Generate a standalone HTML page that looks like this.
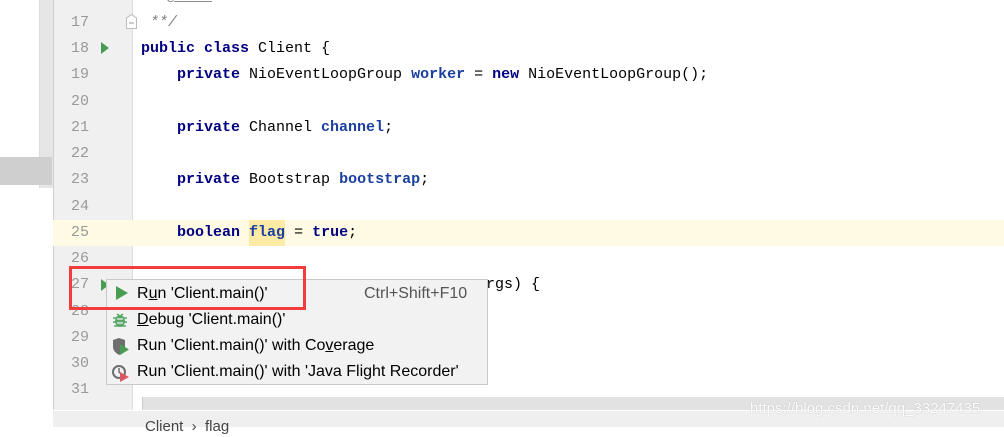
<!DOCTYPE html>
<html><head><meta charset="utf-8"><style>
*{margin:0;padding:0;box-sizing:border-box}
body{width:1004px;height:427px;overflow:hidden;background:#fff;position:relative;font-family:"Liberation Sans",sans-serif}
.abs{position:absolute}
.ln{position:absolute;left:53px;width:36px;text-align:right;font:15px "Liberation Mono",monospace;color:#999;line-height:20px}
.code{position:absolute;left:141px;font:15px "Liberation Mono",monospace;color:#000;line-height:20px;white-space:pre}
.k{color:#000080;font-weight:bold}
.f{font-weight:bold;color:#1b3fa0}
.mi{position:absolute;left:137px;font-size:16px;color:#000;line-height:20px;white-space:pre}
</style></head><body>
<div class="abs" style="left:39px;top:0;width:14px;height:188px;background:#e6e6e6;border-left:1px solid #ddd"></div>
<div class="abs" style="left:0;top:157px;width:52px;height:28px;background:#cfcfcf"></div>
<div class="abs" style="left:53px;top:0;width:80px;height:427px;background:#f0f0f0;border-left:1px solid #d0d0d0;border-right:1px solid #dcdcdc"></div>
<div class="abs" style="left:53px;top:220px;width:951px;height:26px;background:#fffae3"></div>

<div class="ln" style="top:-13px">16</div>
<div class="ln" style="top:13px">17</div>
<div class="ln" style="top:39px">18</div>
<div class="ln" style="top:65px">19</div>
<div class="ln" style="top:92px">20</div>
<div class="ln" style="top:118px">21</div>
<div class="ln" style="top:144px">22</div>
<div class="ln" style="top:170px">23</div>
<div class="ln" style="top:197px">24</div>
<div class="ln" style="top:223px">25</div>
<div class="ln" style="top:249px">26</div>
<div class="ln" style="top:275px">27</div>
<div class="ln" style="top:302px">28</div>
<div class="ln" style="top:328px">29</div>
<div class="ln" style="top:354px">30</div>
<div class="ln" style="top:380px">31</div>

<svg class="abs" style="left:100px;top:42px" width="10" height="12"><path d="M1 0 L9 6 L1 12Z" fill="#499c54"/></svg>
<svg class="abs" style="left:100px;top:279px" width="10" height="12"><path d="M1 0 L9 6 L1 12Z" fill="#499c54"/></svg>
<svg class="abs" style="left:126px;top:14px" width="11" height="15"><path d="M0.5 4 L5.5 0.5 L10.5 4 V14.5 H0.5Z" fill="#fff" stroke="#bbb"/><path d="M3 9H8" stroke="#999"/></svg>

<div class="code" style="top:-13px;left:167px;color:#8c8c8c;font-style:italic"><span style="text-decoration:underline;font-weight:bold">@date</span> 2019/12/19</div>
<div class="code" style="top:13px;left:150px;color:#808080;font-style:italic">**/</div>
<div class="code" style="top:39px"><span class="k">public class</span> Client {</div>
<div class="code" style="top:65px">    <span class="k">private</span> NioEventLoopGroup <span class="f">worker</span> = <span class="k">new</span> NioEventLoopGroup();</div>
<div class="code" style="top:118px">    <span class="k">private</span> Channel <span class="f">channel</span>;</div>
<div class="code" style="top:170px">    <span class="k">private</span> Bootstrap <span class="f">bootstrap</span>;</div>
<div class="abs" style="left:249px;top:220px;width:36px;height:26px;background:#fdeaa5"></div>
<div class="code" style="top:223px">    <span class="k">boolean</span> <span class="f">flag</span> = <span class="k">true</span>;</div>
<div class="code" style="top:275px;left:486px">rgs) {</div>

<div class="abs" style="left:142px;top:397px;width:862px;height:14px;background:#e2e2e2;border-left:1px solid #ccc"></div>
<div class="abs" style="left:53px;top:410px;width:951px;height:17px;background:#efefef;border-top:1px solid #fff"></div>
<div class="abs" style="left:145px;top:417px;font-size:15px;color:#444;line-height:20px">Client &nbsp;› &nbsp;flag</div>
<div class="abs" style="left:750px;top:399px;font-size:15px;color:#fff;text-shadow:0 0 1px #aaa;line-height:20px">https://blog.csdn.net/qq_33247435</div>

<div class="abs" style="left:106px;top:279px;width:382px;height:106px;background:#f2f2f2;border:1px solid #c9c9c9"></div>
<svg class="abs" style="left:115px;top:286px" width="14" height="14"><path d="M1 0 L13 7 L1 14Z" fill="#499c54"/></svg>
<div class="mi" style="top:284px">R<u>u</u>n 'Client.main()'</div>
<div class="mi" style="top:284px;left:364px;color:#555">Ctrl+Shift+F10</div>
<svg class="abs" style="left:112px;top:312px" width="16" height="16"><ellipse cx="8" cy="9" rx="5" ry="6" fill="#59a869"/><path d="M1 6H15M1 10H15M2 14H14M5 2L8 4L11 2" stroke="#59a869" stroke-width="1.5" fill="none"/><path d="M5 7H11M5 11H11" stroke="#f2f2f2" stroke-width="1.3"/></svg>
<div class="mi" style="top:310px"><u>D</u>ebug 'Client.main()'</div>
<svg class="abs" style="left:112px;top:338px" width="18" height="18"><path d="M1 2 L7 0 L13 2 V9 C13 13 10 15 7 17 C4 15 1 13 1 9Z" fill="#6e6e6e"/><path d="M8 6 L17 11.5 L8 17Z" fill="#499c54"/></svg>
<div class="mi" style="top:336px">Run 'Client.main()' with Co<u>v</u>erage</div>
<svg class="abs" style="left:112px;top:364px" width="18" height="18"><circle cx="7" cy="8" r="6" fill="none" stroke="#6e6e6e" stroke-width="2"/><path d="M7 4V8L9 10" stroke="#6e6e6e" stroke-width="1.5" fill="none"/><path d="M8 8 L17 13 L8 18Z" fill="#db5860"/></svg>
<div class="mi" style="top:362px">Run 'Client.main()' with 'Java Flight Recorder'</div>

<div class="abs" style="left:69px;top:266px;width:237px;height:44px;border:3px solid #f33c3c"></div>
</body></html>
